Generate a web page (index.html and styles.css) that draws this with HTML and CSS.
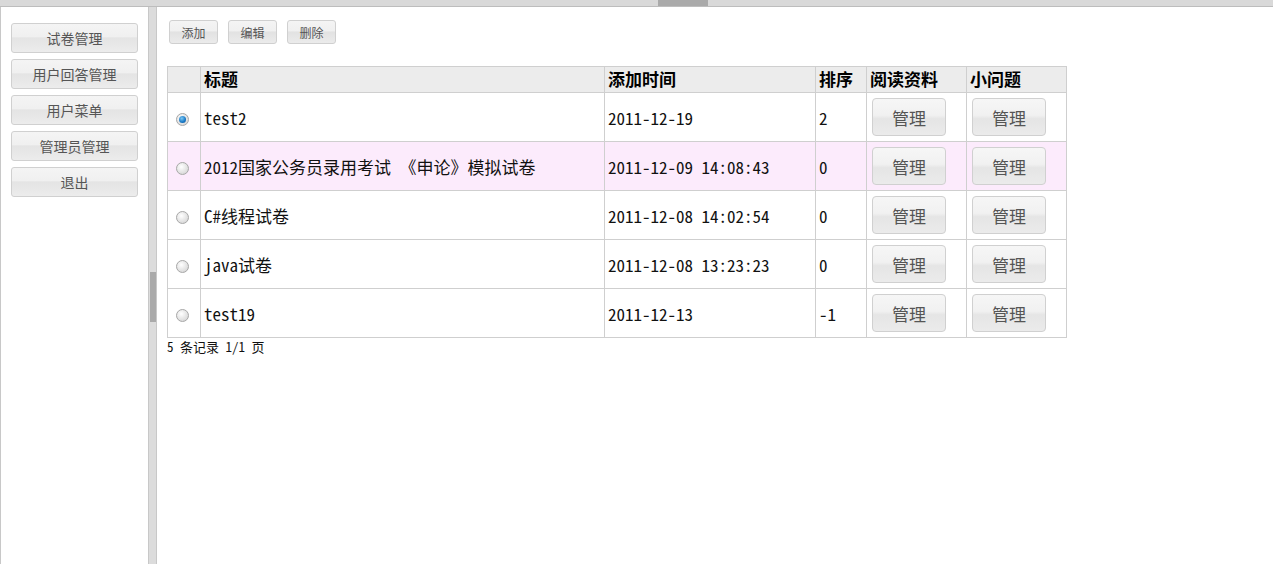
FILE: index.html
```html
<!DOCTYPE html>
<html lang="zh-CN">
<head>
  <meta charset="UTF-8">
  <title>试卷管理</title>
  <link rel="stylesheet" href="styles.css">
</head>
<body>

  <div class="topbar"><span class="grip"></span></div>

  <div class="layout">
    <aside class="sidebar">
      <button class="nav-btn">试卷管理</button>
      <button class="nav-btn">用户回答管理</button>
      <button class="nav-btn">用户菜单</button>
      <button class="nav-btn">管理员管理</button>
      <button class="nav-btn">退出</button>
    </aside>

    <div class="splitter"><span class="handle"></span></div>

    <main class="content">
      <div class="toolbar">
        <button class="tool-btn">添加</button>
        <button class="tool-btn">编辑</button>
        <button class="tool-btn">删除</button>
      </div>

      <table class="grid">
        <colgroup>
          <col class="c-check">
          <col class="c-title">
          <col class="c-time">
          <col class="c-order">
          <col class="c-manage">
          <col class="c-manage">
        </colgroup>
        <thead>
          <tr>
            <th></th>
            <th>标题</th>
            <th>添加时间</th>
            <th>排序</th>
            <th>阅读资料</th>
            <th>小问题</th>
          </tr>
        </thead>
        <tbody>
          <tr>
            <td class="check"><span class="radio checked"></span></td>
            <td>test2</td>
            <td>2011-12-19</td>
            <td>2</td>
            <td><button class="manage-btn">管理</button></td>
            <td><button class="manage-btn">管理</button></td>
          </tr>
          <tr class="hover">
            <td class="check"><span class="radio"></span></td>
            <td>2012国家公务员录用考试 《申论》模拟试卷</td>
            <td>2011-12-09 14:08:43</td>
            <td>0</td>
            <td><button class="manage-btn">管理</button></td>
            <td><button class="manage-btn">管理</button></td>
          </tr>
          <tr>
            <td class="check"><span class="radio"></span></td>
            <td>C#线程试卷</td>
            <td>2011-12-08 14:02:54</td>
            <td>0</td>
            <td><button class="manage-btn">管理</button></td>
            <td><button class="manage-btn">管理</button></td>
          </tr>
          <tr>
            <td class="check"><span class="radio"></span></td>
            <td>java试卷</td>
            <td>2011-12-08 13:23:23</td>
            <td>0</td>
            <td><button class="manage-btn">管理</button></td>
            <td><button class="manage-btn">管理</button></td>
          </tr>
          <tr>
            <td class="check"><span class="radio"></span></td>
            <td>test19</td>
            <td>2011-12-13</td>
            <td>-1</td>
            <td><button class="manage-btn">管理</button></td>
            <td><button class="manage-btn">管理</button></td>
          </tr>
        </tbody>
      </table>

      <p class="pager">5 条记录 1/1 页</p>
    </main>
  </div>

</body>
</html>
```

FILE: styles.css
```css
body {
  margin: 0;
  font-family: "Noto Sans CJK SC", sans-serif;
  color: #222;
  background-color: #fff;
  overflow: hidden;
}

button {
  font-family: "Noto Sans CJK SC", sans-serif;
  cursor: pointer;
}

/* Top splitter bar */
.topbar {
  height: 6px;
  background-color: #d9d9d9;
  border-bottom: 1px solid #bdbdbd;
}

.grip {
  display: block;
  width: 50px;
  height: 6px;
  margin-left: 658px;
  background-color: #aaa;
}

.layout {
  display: flex;
  height: 557px;
}

/* Left menu */
.sidebar {
  width: 149px;
  flex-shrink: 0;
  box-sizing: border-box;
  border-left: 1px solid #c8c8c8;
  border-right: 1px solid #c8c8c8;
  padding: 16px 0 0 10px;
  display: flex;
  flex-direction: column;
  gap: 6px;
}

.nav-btn {
  width: 127px;
  height: 30px;
  padding: 0;
  font-size: 14px;
  color: #555;
  border: 1px solid #d0d0d0;
  border-radius: 3px;
  background: linear-gradient(#f4f4f4, #f0f0f0 45%, #e4e4e4 50%, #ececec);
}

.splitter {
  width: 7px;
  flex-shrink: 0;
  background-color: #dcdcdc;
  padding-top: 265px;
}

.handle {
  display: block;
  width: 6px;
  height: 50px;
  margin-left: 1px;
  background-color: #aaa;
}

/* Main area */
.content {
  flex: 1;
  border-left: 1px solid #c8c8c8;
  padding: 13px 0 0 10px;
}

.toolbar {
  display: flex;
  gap: 10px;
  margin-left: 2px;
  margin-bottom: 22px;
}

.tool-btn {
  width: 49px;
  height: 24px;
  padding: 0;
  font-size: 12px;
  color: #555;
  border: 1px solid #d0d0d0;
  border-radius: 3px;
  background: linear-gradient(#f4f4f4, #f0f0f0 45%, #e2e2e2 50%, #ebebeb);
}

.grid {
  border-collapse: collapse;
  width: 900px;
  table-layout: fixed;
  font-family: "Noto Sans Mono CJK SC", "Liberation Mono", "Noto Sans CJK SC", monospace;
  font-size: 17px;
}

.c-check { width: 33px; }
.c-title { width: 404px; }
.c-time { width: 211px; }
.c-order { width: 51px; }
.c-manage { width: 100px; }

.grid th,
.grid td {
  border: 1px solid #cfcfcf;
  text-align: left;
  padding: 0 3px;
  white-space: nowrap;
}

.grid th {
  height: 26px;
  padding-bottom: 2px;
  box-sizing: border-box;
  background-color: #ececec;
  font-family: "Noto Sans CJK SC", sans-serif;
  font-weight: bold;
  font-size: 17px;
  color: #000;
  line-height: 1;
}

.grid td {
  height: 48px;
  color: #111;
}

.grid tr.hover td {
  background-color: #fcebfc;
}

.grid td.check {
  text-align: center;
  padding: 0 4px 0 0;
}

/* Radio */
.radio {
  display: inline-block;
  width: 11px;
  height: 11px;
  border-radius: 50%;
  border: 1px solid #a8a8a8;
  background: radial-gradient(circle at 40% 35%, #fff, #dcdcdc 70%, #c4c4c4);
  vertical-align: middle;
  position: relative;
}

.radio.checked::after {
  content: "";
  position: absolute;
  left: 2px;
  top: 2px;
  width: 7px;
  height: 7px;
  border-radius: 50%;
  background: radial-gradient(circle at 40% 35%, #7cc8f4, #1676c4 60%, #0c4f8f);
}

.manage-btn {
  width: 74px;
  height: 38px;
  margin-left: 2px;
  font-size: 17px;
  color: #555;
  border: 1px solid #d0d0d0;
  border-radius: 4px;
  background: linear-gradient(#f6f6f6, #f1f1f1 45%, #e5e5e5 55%, #ebebeb);
}

.pager {
  margin: 1px 0 0;
  font-family: "Noto Sans Mono CJK SC", "Liberation Mono", "Noto Sans CJK SC", monospace;
  font-size: 13px;
  line-height: 15px;
  color: #111;
}
```
